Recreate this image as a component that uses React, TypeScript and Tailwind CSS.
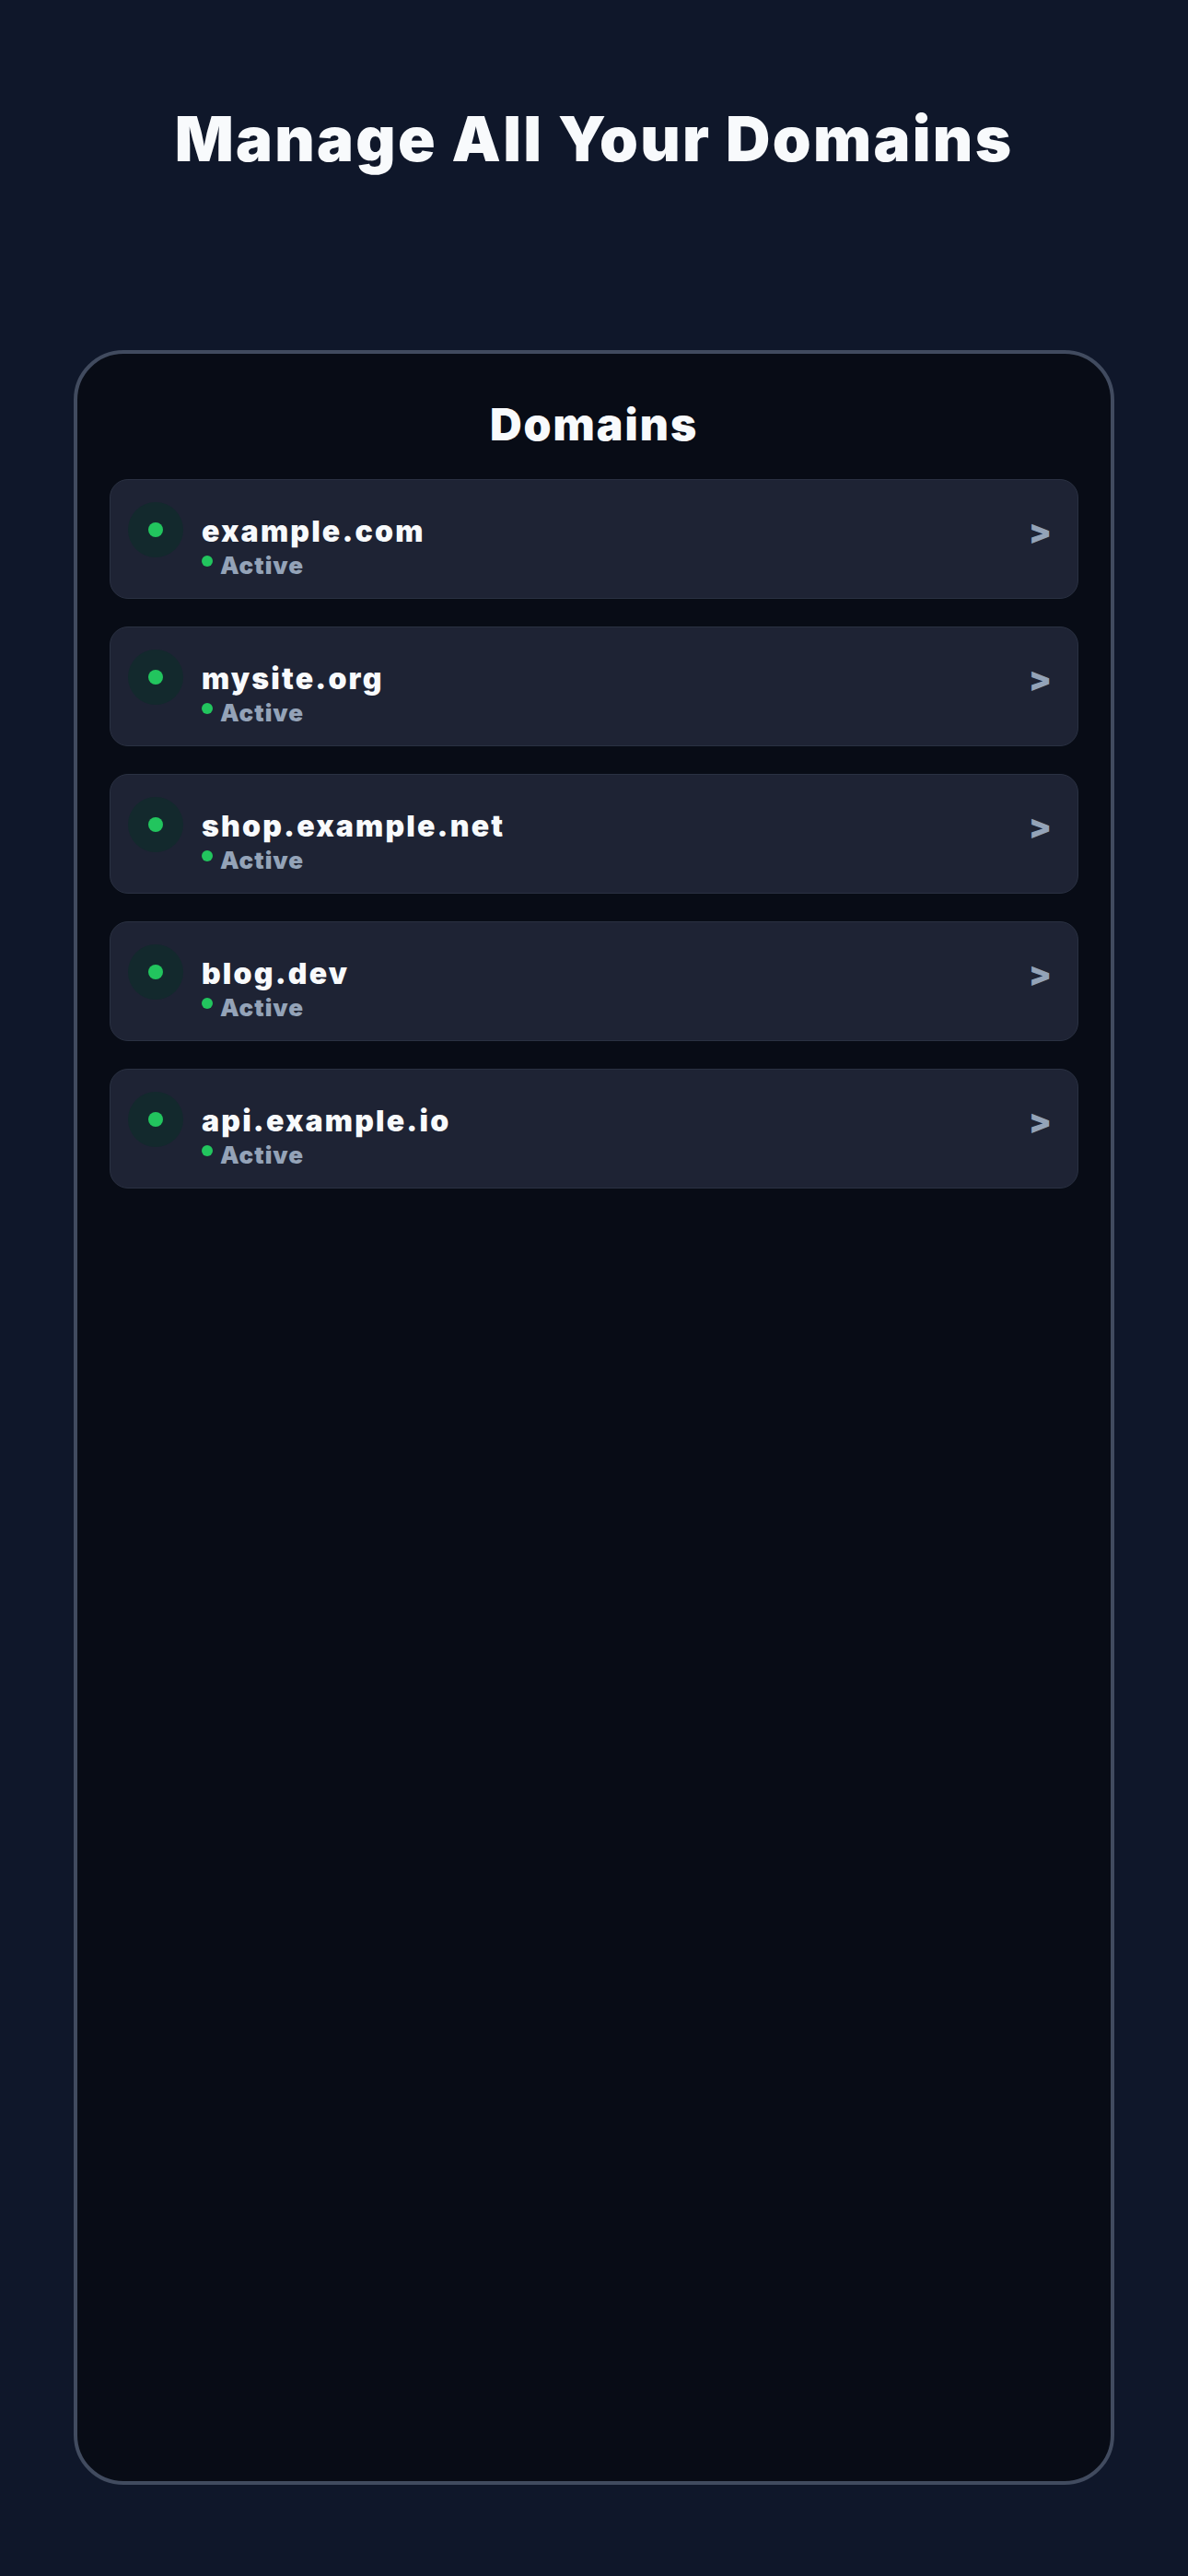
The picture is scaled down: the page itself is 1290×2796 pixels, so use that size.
import React from "react";

const domains = [
  "example.com",
  "mysite.org",
  "shop.example.net",
  "blog.dev",
  "api.example.io",
];

function DomainRow({ name }: { name: string }) {
  return (
    <div className="flex items-start justify-between rounded-[20px] border border-[#2a3142] bg-[#1e2334] pl-[19px] pr-[28px] pt-6 pb-[22px]">
      <div className="flex items-start gap-5">
        <div className="flex h-[60px] w-[60px] shrink-0 items-center justify-center rounded-full bg-[#13292d]">
          <div className="h-4 w-4 rounded-full bg-[#22c55e]" />
        </div>
        <div className="flex flex-col pt-4">
          <div className="text-[32px] leading-none font-black tracking-[2.2px] text-[#f8fafc]">{name}</div>
          <div className="mt-[8px] flex items-start gap-2">
            <div className="mt-[1.5px] h-3 w-3 rounded-full bg-[#22c55e]" />
            <div className="text-[26px] leading-none font-black tracking-[1px] text-[#94a3b8]">Active</div>
          </div>
        </div>
      </div>
      <div className="pt-[14px] text-[36px] leading-none font-black text-[#94a3b8]">&gt;</div>
    </div>
  );
}

export default function App() {
  return (
    <div
      className="min-h-[2796px] w-full bg-[#0f172a]"
      style={{ fontFamily: "Inter, 'Liberation Sans', sans-serif" }}
    >
      <h1 className="pt-[117px] text-center text-[67px] leading-none font-black tracking-[2.3px] text-[#f8fafc]">
        Manage All Your Domains
      </h1>
      <div className="mx-[80px] mt-[196px] h-[2317px] rounded-[54px] border-4 border-[#414b5f] bg-[#080c16] px-[35px] pt-[53px]">
        <h2 className="text-center text-[48px] leading-none font-black tracking-[2px] text-[#f8fafc]">Domains</h2>
        <div className="mt-[35px] flex flex-col gap-[30px]">
          {domains.map((d) => (
            <DomainRow key={d} name={d} />
          ))}
        </div>
      </div>
    </div>
  );
}
